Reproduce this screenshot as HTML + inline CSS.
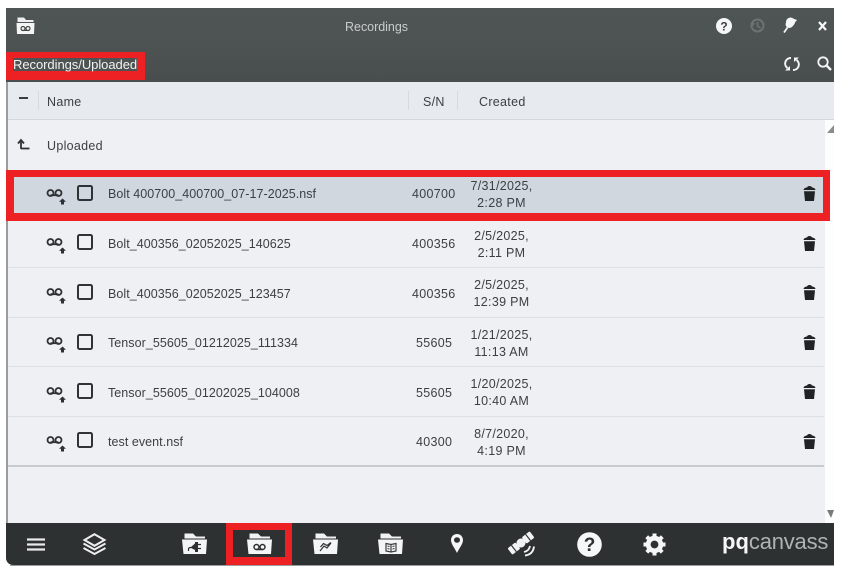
<!DOCTYPE html>
<html><head><meta charset="utf-8"><style>
html,body{margin:0;padding:0;background:#fff}
body{width:843px;height:575px;position:relative;overflow:hidden;font-family:"Liberation Sans",sans-serif;color:#3c4044;font-size:12.5px}
.a{position:absolute}
.t{position:absolute;white-space:nowrap;letter-spacing:.3px}
.f{letter-spacing:.05px}
.c{text-align:center;line-height:17px}
.ln{position:absolute;left:8px;width:816px;height:1px;background:#dcdfe3}
svg{position:absolute;overflow:visible}
</style></head><body>
<div class="a" style="left:6px;top:8px;width:2px;height:515px;background:#9a9c9e"></div>
<div class="a" style="left:8px;top:82px;width:826px;height:441px;background:#eef0f4"></div>
<div class="a" style="left:825px;top:120px;width:9px;height:403px;background:#fdfdfd"></div>
<div class="a" style="left:6px;top:8px;width:828px;height:74px;background:linear-gradient(#4f5555,#4d5352 50%,#484e4d)"></div>
<div class="a" style="left:8px;top:82px;width:826px;height:38px;background:#e7eaee;border-bottom:1px solid #d5d8dc;box-sizing:border-box"></div>

<div class="t" style="left:345px;top:20px;color:#c9cccc;font-size:12.5px;letter-spacing:-.02px">Recordings</div>
<svg style="left:16px;top:17px" width="19" height="17" viewBox="0 0 19 17"><path d="M1.500 0.500H8L10 3h7.500v2H1.500z" fill="#eee"/><path d="M0.500 6H18.500L18 17H1z" fill="#f4f5f5"/><circle cx="7" cy="11.500" r="2" fill="none" stroke="#444" stroke-width="1.200"/><circle cx="12" cy="11.500" r="2" fill="none" stroke="#444" stroke-width="1.200"/><path d="M7 13.500h5" stroke="#444" stroke-width="1"/></svg>

<div class="a" style="left:6px;top:52px;width:139px;height:28px;background:#ed2024"></div>
<div class="a" style="left:13px;top:58px;width:124px;height:13px;background:#4d5352"></div>
<div class="t" style="left:13px;top:57px;color:#f2f2f2;font-size:13px;letter-spacing:-.05px">Recordings/Uploaded</div>

<!-- top right icons -->
<svg style="left:716px;top:18px" width="16" height="16"><circle cx="8" cy="8" r="8" fill="#f5f6f8"/><text x="8" y="12.500" font-family="Liberation Sans" font-size="12" font-weight="bold" text-anchor="middle" fill="#3c4142">?</text></svg>
<svg style="left:750px;top:18px" width="15" height="15" viewBox="0 0 15 15"><circle cx="7.500" cy="7.500" r="6" fill="none" stroke="#6d7271" stroke-width="2"/><path d="M7.500 4v4l3 2" fill="none" stroke="#6d7271" stroke-width="1.600"/><path d="M0 5l3 3 2-3z" fill="#6d7271"/></svg>
<svg style="left:783px;top:17px" width="14" height="16" viewBox="0 0 14 16"><ellipse cx="7.500" cy="5" rx="4.500" ry="4.500" fill="#f5f6f6"/><path d="M10 1.500L14 3 11.500 6z" fill="#f5f6f6"/><path d="M3 5.500C2 8 3 10.500 6 11 9 11 11 8 11 6z" fill="#f5f6f6"/><path d="M4.500 10.500 1 15.500" stroke="#f5f6f6" stroke-width="1.800"/></svg>
<svg style="left:818px;top:21px" width="9" height="10"><path d="M1 1l7 8M8 1L1 9" stroke="#f6f6f6" stroke-width="2.200"/></svg>
<svg style="left:784px;top:56px" width="16" height="16" viewBox="0 0 16 16"><path d="M7 2A5.500 5.500 0 0 0 3.500 12M9 14A5.500 5.500 0 0 0 12.500 4" fill="none" stroke="#f3f4f4" stroke-width="2"/><path d="M1 14.500h5v-4.500zM15 1.500h-5v4.500z" fill="#f3f4f4"/></svg>
<svg style="left:817px;top:56px" width="15" height="15"><circle cx="6" cy="6" r="4.700" fill="none" stroke="#f3f4f4" stroke-width="1.800"/><path d="M9.500 9.500l4.500 4.500" stroke="#f3f4f4" stroke-width="2.400"/></svg>

<!-- table header -->
<div class="a" style="left:19px;top:97px;width:9px;height:2px;background:#3a3e40"></div>
<div class="a" style="left:38px;top:91px;width:1px;height:19px;background:#d6d9dd"></div>
<div class="a" style="left:408px;top:91px;width:1px;height:19px;background:#d6d9dd"></div>
<div class="a" style="left:457px;top:91px;width:1px;height:19px;background:#d6d9dd"></div>
<div class="t" style="left:47px;top:95px">Name</div>
<div class="t" style="left:423px;top:95px">S/N</div>
<div class="t" style="left:479px;top:95px">Created</div>

<!-- up row -->
<svg style="left:17px;top:139px" width="13" height="11"><path d="M4 10V2M1 4.500 4 1l3 3.500" fill="none" stroke="#303436" stroke-width="1.800"/><path d="M4 9.500h8.500" stroke="#303436" stroke-width="1.800"/></svg>
<div class="t" style="left:47px;top:139px">Uploaded</div>

<!-- selected row -->
<div class="a" style="left:6px;top:170px;width:824px;height:51px;background:#ed2024"></div>
<div class="a" style="left:14px;top:177px;width:809px;height:36px;background:#d0d7de"></div>

<div class="ln" style="top:267px"></div>
<div class="ln" style="top:317px"></div>
<div class="ln" style="top:366px"></div>
<div class="ln" style="top:416px"></div>
<div class="ln" style="top:465px;height:2px;background:#c8cbcf"></div>

<svg width="0" height="0" style="position:absolute"><defs>
<g id="vm"><circle cx="4.500" cy="4" r="3" fill="none" stroke="#2e3133" stroke-width="1.800"/><circle cx="12.500" cy="4" r="3" fill="none" stroke="#2e3133" stroke-width="1.800"/><path d="M4.500 6.200h8" stroke="#2e3133" stroke-width="1.800"/><path d="M16.500 9.500l3.500 3.200h-2v2.800h-3v-2.800h-2z" fill="#2e3133"/></g>
<g id="cb"><rect x="1" y="1" width="14" height="14" rx="1.500" fill="none" stroke="#303336" stroke-width="2"/></g>
<g id="tr"><path d="M0.500 5C1 2.500 4 2.500 4 2.500 4.500 .5 8.500 .5 9 2.500 9 2.500 12 2.500 12.500 5z" fill="#202325"/><path d="M1 6.200h11L11 16H2z" fill="#202325"/></g>
</defs></svg>

<!-- rows -->
<svg style="left:46px;top:189px" width="22" height="16"><use href="#vm"/></svg><svg style="left:77px;top:185px" width="16" height="16"><use href="#cb"/></svg>
<div class="t f" style="left:108px;top:187px">Bolt 400700_400700_07-17-2025.nsf</div>
<div class="t" style="left:412px;top:187px">400700</div>
<div class="t c" style="left:458px;width:87px;top:178px">7/31/2025,<br>2:28 PM</div>
<svg style="left:803px;top:185px" width="13" height="17"><use href="#tr"/></svg>

<svg style="left:46px;top:238px" width="22" height="16"><use href="#vm"/></svg><svg style="left:77px;top:234px" width="16" height="16"><use href="#cb"/></svg>
<div class="t f" style="left:108px;top:237px">Bolt_400356_02052025_140625</div>
<div class="t" style="left:412px;top:237px">400356</div>
<div class="t c" style="left:458px;width:87px;top:228px">2/5/2025,<br>2:11 PM</div>
<svg style="left:803px;top:235px" width="13" height="17"><use href="#tr"/></svg>

<svg style="left:46px;top:288px" width="22" height="16"><use href="#vm"/></svg><svg style="left:77px;top:284px" width="16" height="16"><use href="#cb"/></svg>
<div class="t f" style="left:108px;top:287px">Bolt_400356_02052025_123457</div>
<div class="t" style="left:412px;top:287px">400356</div>
<div class="t c" style="left:458px;width:87px;top:277px">2/5/2025,<br>12:39 PM</div>
<svg style="left:803px;top:284px" width="13" height="17"><use href="#tr"/></svg>

<svg style="left:46px;top:337px" width="22" height="16"><use href="#vm"/></svg><svg style="left:77px;top:334px" width="16" height="16"><use href="#cb"/></svg>
<div class="t f" style="left:108px;top:336px">Tensor_55605_01212025_111334</div>
<div class="t" style="left:416px;top:336px">55605</div>
<div class="t c" style="left:458px;width:87px;top:327px">1/21/2025,<br>11:13 AM</div>
<svg style="left:803px;top:334px" width="13" height="17"><use href="#tr"/></svg>

<svg style="left:46px;top:387px" width="22" height="16"><use href="#vm"/></svg><svg style="left:77px;top:383px" width="16" height="16"><use href="#cb"/></svg>
<div class="t f" style="left:108px;top:386px">Tensor_55605_01202025_104008</div>
<div class="t" style="left:416px;top:386px">55605</div>
<div class="t c" style="left:458px;width:87px;top:376px">1/20/2025,<br>10:40 AM</div>
<svg style="left:803px;top:383px" width="13" height="17"><use href="#tr"/></svg>

<svg style="left:46px;top:436px" width="22" height="16"><use href="#vm"/></svg><svg style="left:77px;top:432px" width="16" height="16"><use href="#cb"/></svg>
<div class="t f" style="left:108px;top:435px">test event.nsf</div>
<div class="t" style="left:416px;top:435px">40300</div>
<div class="t c" style="left:458px;width:87px;top:426px">8/7/2020,<br>4:19 PM</div>
<svg style="left:803px;top:433px" width="13" height="17"><use href="#tr"/></svg>

<!-- scroll arrows -->
<svg style="left:827px;top:125px" width="7" height="9"><path d="M0 8L7 0V8z" fill="#8a8c8e"/></svg>
<svg style="left:827px;top:510px" width="7" height="8"><path d="M0 0H7L4 8z" fill="#777a7c"/></svg>

<!-- bottom bar -->
<div class="a" style="left:6px;top:523px;width:828px;height:42px;background:#2e3131;border-radius:0 0 0 7px"></div>
<div class="a" style="left:10px;top:565px;width:824px;height:1px;background:#9b9d9f"></div>
<div class="a" style="left:226px;top:523px;width:66px;height:42px;background:#ed2024"></div>
<div class="a" style="left:233px;top:530px;width:52px;height:27px;background:#2e3131"></div>

<svg style="left:27px;top:538px" width="18" height="13"><path d="M0 1.500h18M0 6.500h18M0 11.500h18" stroke="#e8e9e9" stroke-width="2.300"/></svg>
<svg style="left:82px;top:533px" width="25" height="22" viewBox="0 0 25 22"><path d="M12.500 1.200l10 5.800-10 5.800-10-5.800z" fill="none" stroke="#eee" stroke-width="2"/><path d="M1.500 10.500l11 6 11-6M1.500 15l11 6 11-6" fill="none" stroke="#eee" stroke-width="2"/></svg>

<svg width="0" height="0" style="position:absolute"><defs><g id="fd"><path d="M2.500 0.500H11L14 3.500H23V5.500H2.500z" fill="#f1f2f2"/><path d="M0 6.500H25L24 21H1.500z" fill="#f4f5f6"/></g></defs></svg>
<svg style="left:182px;top:533px" width="25" height="21"><use href="#fd"/><path d="M9 14l4-3.500V9h3v10h-3v-2l-4-2z" fill="#2e3131"/><path d="M16 11.500h3M16 15.500h3M6.500 18v-2q0-1.500 2.500-1.500" stroke="#2e3131" stroke-width="1.200" fill="none"/></svg>
<svg style="left:247px;top:533px" width="25" height="21"><use href="#fd"/><circle cx="9.500" cy="14" r="2.500" fill="none" stroke="#2e3131" stroke-width="1.500"/><circle cx="15.500" cy="14" r="2.500" fill="none" stroke="#2e3131" stroke-width="1.500"/><path d="M9.500 16.500h6" stroke="#2e3131" stroke-width="1.500"/></svg>
<svg style="left:313px;top:533px" width="25" height="21"><use href="#fd"/><path d="M7 18l4-5 3 2 4-5M7.500 14l3-3.500 3.500 2 4-3" fill="none" stroke="#2e3131" stroke-width="1.200"/></svg>
<svg style="left:378px;top:533px" width="25" height="21"><use href="#fd"/><path d="M8 10.500l5 1 5-1v7.500l-5 1-5-1zM13 11.500v7.500" fill="none" stroke="#3a3d3e" stroke-width="1.200"/><path d="M9.500 13l2 .5M14.500 13.500l2-.5M9.500 15.500l2 .5M14.500 16l2-.5" stroke="#3a3d3e" stroke-width="1"/></svg>
<svg style="left:451px;top:534px" width="12" height="19" viewBox="0 0 12 19"><path d="M6 0C2.500 0 0 2.700 0 6.200 0 10 3.800 14 6 19 8.200 14 12 10 12 6.200 12 2.700 9.500 0 6 0z" fill="#f5f6f6"/><ellipse cx="6" cy="6" rx="3" ry="2.800" fill="#2e3131"/></svg>
<svg style="left:510px;top:532px" width="25" height="24" viewBox="0 0 25 24"><g transform="rotate(-38 11 11)"><rect x="-3" y="7" width="10" height="8" rx="1.200" fill="#f2f3f3"/><rect x="15" y="7" width="10" height="8" rx="1.200" fill="#f2f3f3"/><circle cx="11" cy="11" r="4.500" fill="#f2f3f3"/><path d="M2 7v8M20 7v8" stroke="#2e3131" stroke-width="1.200"/></g><path d="M14 20q5-1 6-6M15 23.500q8-1 9-9" fill="none" stroke="#f2f3f3" stroke-width="1.900"/></svg>
<svg style="left:577px;top:532px" width="25" height="25"><circle cx="12.500" cy="12.500" r="12.300" fill="#f6f7f8"/><text x="12.500" y="19" font-family="Liberation Sans" font-size="19" font-weight="bold" text-anchor="middle" fill="#2e3131">?</text></svg>
<svg style="left:643px;top:533px" width="23" height="23" viewBox="0 0 23 23"><circle cx="11.500" cy="11.500" r="6.300" fill="none" stroke="#f5f6f6" stroke-width="4.800"/><path d="M11.500 0.500v22M0.500 11.500h22M3.700 3.700l15.600 15.600M19.300 3.700L3.700 19.300" stroke="#f5f6f6" stroke-width="4" stroke-dasharray="4 14 4"/></svg>

<div class="t" style="left:722px;top:529px;font-size:22px;letter-spacing:0;color:#e4e5e5"><b style="color:#f6f6f6">pq</b><span style="color:#b0b3b3;letter-spacing:-.2px">canvass</span></div>
</body></html>
